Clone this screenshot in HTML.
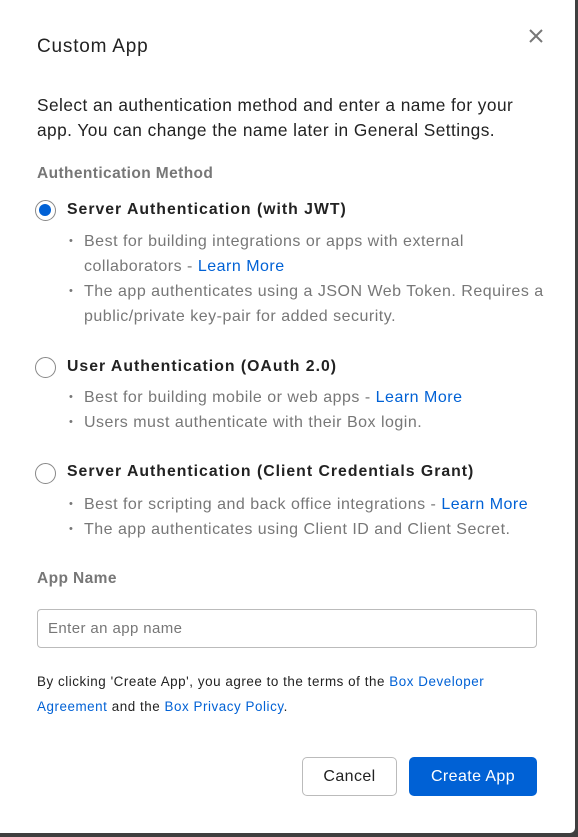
<!DOCTYPE html>
<html><head><style>
*{margin:0;padding:0;box-sizing:border-box}
html,body{width:578px;height:837px;overflow:hidden;background:#3f3f3f;font-family:"Liberation Sans",sans-serif}
.m{position:absolute;left:0;top:0;width:575px;height:833px;background:#fff;border-radius:0 0 5px 0}
.t{position:absolute;left:37px;top:36px;font-size:19px;color:#222;letter-spacing:0.8px}
.x{position:absolute;left:527px;top:27px;width:18px;height:18px}
.p{position:absolute;left:37px;top:93px;font-size:17.3px;letter-spacing:0.45px;line-height:25px;color:#222;width:505px}
.h{position:absolute;left:37px;font-size:15.5px;font-weight:bold;color:#777;letter-spacing:0.4px}
.r{position:absolute;left:35px;width:21px;height:21px;border:1.5px solid #888;border-radius:50%}
.r.on::after{content:"";position:absolute;left:3px;top:3px;width:12px;height:12px;border-radius:50%;background:#0061d5}
.l{position:absolute;left:67px;font-size:15.8px;font-weight:bold;color:#222;letter-spacing:1px}
ul{position:absolute;left:67px;list-style:none;font-size:16px;letter-spacing:0.5px;line-height:25px;color:#777;width:480px}
li{padding-left:17px;position:relative}
li::before{content:"•";position:absolute;left:2px;font-size:11px}
a{color:#0061d5;text-decoration:none}
.in{position:absolute;left:37px;top:609px;width:500px;height:39px;border:1px solid #bbb;border-radius:4px;font-size:15px;letter-spacing:0.4px;color:#777;padding:10px 10px}
.f{position:absolute;left:37px;top:669px;font-size:13.4px;letter-spacing:0.55px;line-height:25px;color:#222;width:505px}
.b{position:absolute;top:757px;height:39px;border-radius:5px;font-size:16px;letter-spacing:0.4px;display:flex;align-items:center;justify-content:center}
</style></head><body><div class="m">
<div class="t">Custom App</div>
<svg class="x" viewBox="0 0 18 18"><path d="M3 3L15 15M15 3L3 15" stroke="#777" stroke-width="2"/></svg>
<div class="p">Select an authentication method and enter a name for your app. You can change the name later in General Settings.</div>
<div class="h" style="top:165px">Authentication Method</div>
<div class="r on" style="top:200px"></div><div class="l" style="top:201px">Server Authentication (with JWT)</div>
<ul style="top:229px"><li>Best for building integrations or apps with external collaborators - <a>Learn More</a></li><li>The app authenticates using a JSON Web Token. Requires a public/private key-pair for added security.</li></ul>
<div class="r" style="top:357px"></div><div class="l" style="top:358px">User Authentication (OAuth 2.0)</div>
<ul style="top:385px"><li>Best for building mobile or web apps - <a>Learn More</a></li><li>Users must authenticate with their Box login.</li></ul>
<div class="r" style="top:463px"></div><div class="l" style="top:463px">Server Authentication (Client Credentials Grant)</div>
<ul style="top:492px"><li>Best for scripting and back office integrations - <a>Learn More</a></li><li>The app authenticates using Client ID and Client Secret.</li></ul>
<div class="h" style="top:570px">App Name</div>
<div class="in">Enter an app name</div>
<div class="f">By clicking 'Create App', you agree to the terms of the <a>Box Developer Agreement</a> and the <a>Box Privacy Policy</a>.</div>
<div class="b" style="left:302px;width:95px;border:1px solid #bbb;color:#222">Cancel</div>
<div class="b" style="left:409px;width:128px;background:#0061d5;color:#fff">Create App</div>
</div></body></html>
